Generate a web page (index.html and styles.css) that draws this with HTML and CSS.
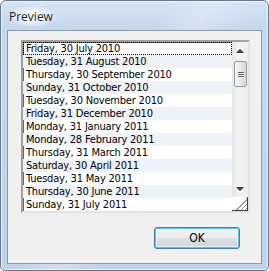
FILE: index.html
```html
<!DOCTYPE html>
<html><head>
<meta charset="UTF-8"><title>Preview</title><link rel="stylesheet" href="styles.css"></head><body>

<div class="window">
    <div class="titlebar"><span class="title">Preview</span></div>

    <div class="client">
        <div class="listbox">
            <ul class="items">
                <li class="focused">Friday, 30 July 2010</li>
                <li>Tuesday, 31 August 2010</li>
                <li>Thursday, 30 September 2010</li>
                <li>Sunday, 31 October 2010</li>
                <li>Tuesday, 30 November 2010</li>
                <li>Friday, 31 December 2010</li>
                <li>Monday, 31 January 2011</li>
                <li>Monday, 28 February 2011</li>
                <li>Thursday, 31 March 2011</li>
                <li>Saturday, 30 April 2011</li>
                <li>Tuesday, 31 May 2011</li>
                <li>Thursday, 30 June 2011</li>
                <li>Sunday, 31 July 2011</li>
            </ul>
            <div class="side">
                <div class="scrollbar">
                    <div class="arrow up"></div>
                    <div class="track">
                        <div class="thumb"><span></span><span></span><span></span></div>
                    </div>
                    <div class="arrow down"></div>
                </div>
                <div class="grip"></div>
            </div>
        </div>

        <div class="buttons">
            <button class="ok">OK</button>
        </div>
    </div>
</div>

</body></html>
```

FILE: styles.css
```css
body {
    margin: 0;
    padding: 0;
    background-color: #ffffff;
    font-family: "DejaVu Sans", sans-serif;
}
.window {
    width: 269px;
    height: 271px;
    box-sizing: border-box;
    border: 1px solid #66788e;
    border-radius: 6px 6px 5px 5px;
    padding: 0 6px 6px 6px;
    display: flex;
    flex-direction: column;
    background: linear-gradient(120deg, rgba(255,255,255,0) 40%, rgba(255,255,255,0.25) 50%, rgba(255,255,255,0) 60%),
                linear-gradient(to bottom, #d4e3f4 0px, #c3d7ee 30px, #bfd3ec 100%);
    box-shadow: inset 0 0 0 1px rgba(255, 255, 255, 0.7);
}
.titlebar {
    height: 29px;
    display: flex;
    align-items: center;
    padding-left: 1px;
}
.title {
    font-family: "Open Sans", sans-serif;
    font-size: 12px;
    color: #1e1e1e;
    padding: 2px 4px 2px 1px;
    margin-top: 1px;
    border-radius: 10px;
    background: radial-gradient(ellipse at center, rgba(255,255,255,0.75) 30%, rgba(255,255,255,0) 75%);
}
.client {
    flex: 1;
    border: 1px solid #8a99aa;
    background-color: #f0f0f0;
    padding: 9px 11px 0 13px;
    display: flex;
    flex-direction: column;
}
.listbox {
    height: 169px;
    display: flex;
    border-style: solid;
    border-width: 2px;
    border-color: #a0a0a0 #e3e3e3 #e3e3e3 #a0a0a0;
    box-shadow: inset 1px 1px 0 #696969;
    background-color: #ffffff;
}
.items {
    list-style: none;
    margin: 0;
    padding: 0;
    flex: 1;
}
.items li {
    height: 13px;
    line-height: 13px;
    padding-left: 3px;
    font-size: 11px;
    font-stretch: condensed;
    letter-spacing: -0.2px;
    color: #000000;
    white-space: nowrap;
    overflow: hidden;
}
.items li:nth-child(even) {
    background-color: #eef2f9;
}
.items li.focused {
    outline: 1px dotted #000000;
    outline-offset: -1px;
}
.side {
    width: 16px;
    display: flex;
    flex-direction: column;
}
.scrollbar {
    flex: 1;
    display: flex;
    flex-direction: column;
    background: linear-gradient(to right, #e6e6e6, #f2f2f2 40%, #eeeeee);
}
.arrow {
    height: 17px;
    display: flex;
    align-items: center;
    justify-content: center;
}
.arrow::before {
    content: "";
    border-left: 4px solid transparent;
    border-right: 4px solid transparent;
}
.arrow.up::before {
    border-bottom: 4px solid #3c3c3c;
}
.arrow.down::before {
    border-top: 4px solid #3c3c3c;
}
.track {
    flex: 1;
    padding: 2px 1px 0 2px;
}
.thumb {
    height: 24px;
    border: 1px solid #9a9a9a;
    border-radius: 2px;
    background: linear-gradient(to right, #f6f6f6, #e4e4e4 60%, #d6d6d6);
    display: flex;
    flex-direction: column;
    justify-content: center;
    align-items: center;
    gap: 1px;
}
.thumb span {
    width: 6px;
    height: 1px;
    background-color: #5a5a5a;
    box-shadow: 0 1px 0 #ffffff;
}
.grip {
    height: 14px;
    box-sizing: border-box;
    border-right: 1px solid #3a3a3a;
    border-bottom: 1px solid #3a3a3a;
    background: linear-gradient(135deg, #ffffff 55%, transparent 55%),
                repeating-linear-gradient(135deg, #9a9a9a 0 1px, #ffffff 1px 3px);
}
.buttons {
    display: flex;
    justify-content: flex-end;
    padding-top: 14px;
    padding-right: 10px;
}
.ok {
    width: 86px;
    height: 22px;
    border: 1px solid #3c7fb1;
    border-radius: 3px;
    background: linear-gradient(to bottom, #f2f2f2 0%, #ebebeb 50%, #dde1e5 51%, #d0d5da 100%);
    box-shadow: inset 0 0 0 1px #5dc1f0, inset 0 0 0 2px rgba(255,255,255,0.6);
    font-family: "DejaVu Sans", sans-serif;
    font-stretch: condensed;
    font-size: 12px;
    color: #000000;
    padding: 0;
}
```
